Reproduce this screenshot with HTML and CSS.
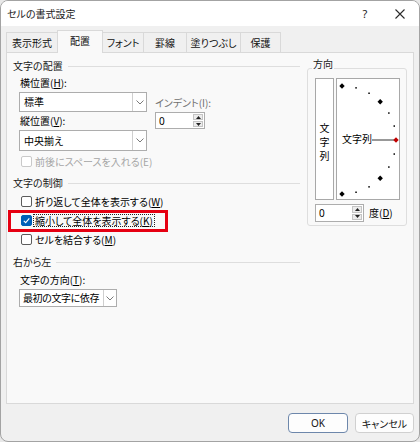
FILE: index.html
```html
<!DOCTYPE html>
<html lang="ja">
<head>
<meta charset="utf-8">
<title>セルの書式設定</title>
<link rel="stylesheet" href="styles.css">
</head>
<body>
<div class="window">
  <div class="titlebar">
    <span class="title">セルの書式設定</span>
    <span class="tb-help">?</span>
    <svg class="tb-close" width="10" height="10" viewBox="0 0 10 10"><path d="M0.5 0.5 L9.5 9.5 M9.5 0.5 L0.5 9.5" stroke="#2b2b2b" stroke-width="1.1" fill="none"/></svg>
  </div>

  <div class="tabs">
    <div class="tab tab-1">表示形式</div>
    <div class="tab tab-2 active">配置</div>
    <div class="tab tab-3">フォント</div>
    <div class="tab tab-4">罫線</div>
    <div class="tab tab-5">塗りつぶし</div>
    <div class="tab tab-6">保護</div>
  </div>

  <div class="panel">
    <div class="col-left">
      <div class="group-head"><span>文字の配置</span><i class="rule"></i></div>
      <div class="align-grid">
        <div class="align-main">
          <div class="lbl lbl-h">横位置(<u>H</u>):</div>
          <div class="select sel-1">
            <span class="val">標準</span>
            <span class="dd"><svg width="8" height="5" viewBox="0 0 8 5"><path d="M0.5 0.5 L4 4 L7.5 0.5" stroke="#7a7a7a" fill="none" stroke-width="1"/></svg></span>
          </div>
          <div class="lbl lbl-v">縦位置(<u>V</u>):</div>
          <div class="select sel-2">
            <span class="val">中央揃え</span>
            <span class="dd"><svg width="8" height="5" viewBox="0 0 8 5"><path d="M0.5 0.5 L4 4 L7.5 0.5" stroke="#7a7a7a" fill="none" stroke-width="1"/></svg></span>
          </div>
        </div>
        <div class="indent">
          <div class="lbl-indent">インデント(I):</div>
          <div class="spin spin-indent">
            <span class="spin-val">0</span>
            <span class="spin-btns">
              <span class="sb"><svg width="5" height="3" viewBox="0 0 5 3"><path d="M2.5 0 L5 3 L0 3 Z" fill="#222"/></svg></span>
              <span class="sb"><svg width="5" height="3" viewBox="0 0 5 3"><path d="M0 0 L5 0 L2.5 3 Z" fill="#222"/></svg></span>
            </span>
          </div>
        </div>
      </div>
      <div class="check check-first disabled"><span class="box"></span><span class="ctext">前後にスペースを入れる(E)</span></div>

      <div class="group-head head-2"><span>文字の制御</span><i class="rule"></i></div>
      <div class="check"><span class="box"></span><span class="ctext">折り返して全体を表示する(<u>W</u>)</span></div>
      <div class="check"><span class="box checked"><svg width="9" height="9" viewBox="0 0 9 9"><path d="M1.8 4.8 L3.7 6.6 L7.3 2.4" stroke="#fff" stroke-width="1.1" fill="none"/></svg></span><span class="ctext focus">縮小して全体を表示する(<u>K</u>)</span></div>
      <div class="check"><span class="box"></span><span class="ctext">セルを結合する(<u>M</u>)</span></div>

      <div class="group-head head-3"><span>右から左</span><i class="rule"></i></div>
      <div class="lbl lbl-t">文字の方向(<u>T</u>):</div>
      <div class="select sel-3">
        <span class="val">最初の文字に依存</span>
        <span class="dd"><svg width="8" height="5" viewBox="0 0 8 5"><path d="M0.5 0.5 L4 4 L7.5 0.5" stroke="#7a7a7a" fill="none" stroke-width="1"/></svg></span>
      </div>
    </div>

    <div class="col-right">
      <div class="orient-label">方向</div>
      <div class="orient-box">
        <div class="orient-row">
          <div class="vbox"><span>文</span><span>字</span><span>列</span></div>
          <div class="arc">
            <span class="arc-text">文字列</span>
            <svg class="arc-svg" width="62" height="120" viewBox="0 0 62 120">
              <line x1="35" y1="61" x2="57" y2="61" stroke="#333" stroke-width="1"/>
              <g fill="#000">
                <polygon points="5,4.3 7.7,7 5,9.7 2.3,7"/>
                <rect x="18.3" y="8.1" width="1.5" height="1.5"/>
                <rect x="31.3" y="13.5" width="1.5" height="1.5"/>
                <polygon points="43.2,20.1 45.9,22.8 43.2,25.5 40.5,22.8"/>
                <rect x="51.1" y="33.3" width="1.5" height="1.5"/>
                <rect x="56.5" y="46.3" width="1.5" height="1.5"/>
                <rect x="56.5" y="74.3" width="1.5" height="1.5"/>
                <rect x="51.1" y="87.3" width="1.5" height="1.5"/>
                <polygon points="43.2,96.5 45.9,99.2 43.2,101.9 40.5,99.2"/>
                <rect x="31.3" y="107.1" width="1.5" height="1.5"/>
                <rect x="18.3" y="112.5" width="1.5" height="1.5"/>
                <polygon points="5,112.3 7.7,115 5,117.7 2.3,115"/>
              </g>
              <polygon points="59,58.3 61.7,61 59,63.7 56.3,61" fill="#c00000"/>
            </svg>
          </div>
        </div>
        <div class="deg-row">
          <div class="spin spin-deg">
            <span class="spin-val">0</span>
            <span class="spin-btns">
              <span class="sb"><svg width="5" height="3" viewBox="0 0 5 3"><path d="M2.5 0 L5 3 L0 3 Z" fill="#222"/></svg></span>
              <span class="sb"><svg width="5" height="3" viewBox="0 0 5 3"><path d="M0 0 L5 0 L2.5 3 Z" fill="#222"/></svg></span>
            </span>
          </div>
          <span class="deg-label">度(<u>D</u>)</span>
        </div>
      </div>
    </div>
  </div>

  <div class="buttons">
    <button class="btn btn-ok">OK</button>
    <button class="btn">キャンセル</button>
  </div>

  <div class="highlight"></div>
</div>
</body>
</html>
```

FILE: styles.css
```css
* { box-sizing: border-box; }

body {
  margin: 0;
  background: #e8e8e8;
  font-family: "Noto Sans CJK JP", "Noto Sans", sans-serif;
  font-size: 10px;
  line-height: 14px;
  font-feature-settings: "palt";
  color: #000;
  white-space: nowrap;
}

u { text-decoration: underline; text-underline-offset: 1px; }

.window {
  position: relative;
  width: 420px;
  height: 442px;
  border: 1px solid #a3a3a3;
  border-radius: 8px;
  background: #f0f0f0;
  overflow: hidden;
  display: flex;
  flex-direction: column;
}

/* title bar */
.titlebar {
  height: 25px;
  flex: none;
  background: #fff;
  display: flex;
  align-items: center;
  padding-left: 6px;
  padding-right: 14px;
}
.title { color: #1a1a1a; }
.tb-help {
  margin-left: auto;
  width: 8px;
  text-align: center;
  font-size: 11px;
  font-family: "Noto Sans", sans-serif;
  color: #222;
}
.tb-close { margin-left: 26px; }

/* tabs */
.tabs {
  height: 26px;
  flex: none;
  display: flex;
  align-items: flex-end;
  padding-left: 5px;
}
.tab {
  height: 20px;
  margin-right: -1px;
  border: 1px solid #d9d9d9;
  border-bottom: none;
  background: #f0f0f0;
  display: flex;
  align-items: center;
  justify-content: center;
  color: #111;
}
.tab.active {
  position: relative;
  z-index: 2;
  height: 23px;
  margin-bottom: -1px;
  padding-bottom: 2px;
  background: #f9f9f9;
}
.tab-1 { width: 52px; }
.tab-2 { width: 46px; }
.tab-3 { width: 42px; }
.tab-4 { width: 44px; }
.tab-5 { width: 55px; }
.tab-6 { width: 41px; }

/* main panel */
.panel {
  margin: 0 5px;
  height: 352px;
  flex: none;
  border: 1px solid #d9d9d9;
  background: #f9f9f9;
  display: grid;
  grid-template-columns: 287px 100px;
  column-gap: 7px;
  align-items: start;
  padding: 6px 5px 0 6px;
}

.col-left { display: flex; flex-direction: column; }

.group-head {
  height: 14px;
  display: flex;
  align-items: center;
  gap: 5px;
  color: #1a1a1a;
}
.rule { flex: 1; height: 1px; background: #dedede; }
.head-2 { margin-top: 5px; }
.head-3 { margin-top: 6px; }

.align-grid { display: flex; padding-left: 6px; }
.align-main { width: 128px; }
.lbl { padding-left: 1px; }
.lbl-h { height: 19px; line-height: 19px; }
.lbl-v { height: 18px; line-height: 18px; }
.lbl-t { height: 18px; line-height: 18px; margin-top: 2px; padding-left: 7px; }

.select {
  display: flex;
  align-items: stretch;
  border: 1px solid #adadad;
  background: #fff;
}
.select .val {
  flex: 1;
  min-width: 0;
  overflow: hidden;
  display: flex;
  align-items: center;
  padding-left: 4px;
}
.select .dd {
  flex: none;
  width: 14px;
  border-left: 1px solid #cfcfcf;
  display: flex;
  align-items: center;
  justify-content: center;
}
.sel-1 { height: 20px; }
.sel-2 { height: 21px; }
.sel-3 { height: 18px; width: 98px; margin-left: 6px; }
.sel-3 .val { padding-left: 3px; letter-spacing: -0.4px; }
.sel-3 .dd { width: 13px; }

.indent { margin-left: 8px; padding-top: 23px; }
.lbl-indent { color: #707070; height: 14px; }

.spin {
  display: flex;
  border: 1px solid #adadad;
  background: #fff;
}
.spin-indent { width: 50px; height: 17px; margin-top: 2px; }
.spin-deg { width: 49px; height: 18px; }
.spin-val { flex: 1; display: flex; align-items: center; padding-left: 3px; font-family: "Noto Sans", sans-serif; }
.spin-btns {
  width: 10px;
  margin: 1px;
  display: flex;
  flex-direction: column;
  gap: 1px;
}
.sb {
  flex: 1;
  background: #ececec;
  border: 1px solid #c4c4c4;
  display: flex;
  align-items: center;
  justify-content: center;
}

/* checkboxes */
.check {
  height: 19px;
  display: flex;
  align-items: center;
  padding-left: 8px;
}
.check-first { height: 20px; }
.head-2 + .check { margin-top: 2px; }
.box {
  width: 11px;
  height: 11px;
  border: 1px solid #5c5c5c;
  border-radius: 2px;
  background: #fff;
  margin-right: 1px;
  display: flex;
  align-items: center;
  justify-content: center;
}
.box.checked { background: #005fb8; border-color: #005fb8; }
.ctext {
  border: 1px dotted transparent;
  padding: 0 1px;
  height: 13px;
  line-height: 11px;
}
.ctext.focus { border-color: #222; }
.disabled { color: #a6a6a6; }
.disabled .box { border-color: #c9c9c9; }

/* orientation */
.col-right { display: flex; flex-direction: column; }
.orient-label {
  position: relative;
  z-index: 1;
  align-self: flex-start;
  margin-top: -2px;
  margin-left: 5px;
  padding: 0 1px;
  background: #f9f9f9;
  color: #1a1a1a;
}
.orient-box {
  margin-top: -3px;
  height: 158px;
  border: 1px solid #dedede;
  border-radius: 3px;
  padding: 9px 0 0 7px;
}
.orient-row { display: flex; gap: 2px; height: 122px; }
.vbox {
  width: 19px;
  border: 1px solid #a8a8a8;
  background: #fff;
  display: flex;
  flex-direction: column;
  align-items: center;
  justify-content: center;
  padding-top: 5px;
}
.vbox span { display: block; height: 14px; }
.arc {
  position: relative;
  width: 64px;
  border: 1px solid #a8a8a8;
  background: #fff;
  display: flex;
  align-items: center;
  padding-left: 5px;
}
.arc-text { font-feature-settings: normal; }
.arc-svg { position: absolute; left: 0; top: 0; }

.deg-row {
  display: flex;
  align-items: center;
  margin-top: 4px;
}
.deg-label { margin-left: 5px; }

/* footer buttons */
.buttons {
  display: flex;
  justify-content: flex-end;
  gap: 7px;
  padding: 9px 5px 0 0;
}
.btn {
  height: 20px;
  border: 1px solid #d0d0d0;
  border-radius: 4px;
  background: #fdfdfd;
  font-family: inherit;
  font-size: 10px;
  font-feature-settings: "palt";
  color: #111;
  padding: 0;
}
.btn-ok { width: 60px; border-color: #6d87ab; font-family: "Noto Sans", sans-serif; }
.btn:not(.btn-ok) { width: 59px; }

/* annotation overlay */
.highlight {
  position: absolute;
  left: 7px;
  top: 209px;
  width: 160px;
  height: 22px;
  border: 3px solid #e60012;
}
```
